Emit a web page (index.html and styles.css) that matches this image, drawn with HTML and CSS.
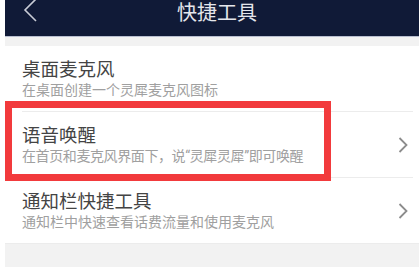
FILE: index.html
```html
<!DOCTYPE html>
<html lang="zh-CN">
<head>
    <meta charset="UTF-8">
    <meta name="viewport" content="width=device-width, initial-scale=1.0">
    <title>快捷工具</title>
    <link rel="stylesheet" href="styles.css">
</head>
<body>

<div class="page">
    <!-- Top bar -->
    <div class="top-bar">
        <svg class="back-icon" width="16" height="24" viewBox="0 0 16 24">
            <polyline points="13,0 2,11 13,22" fill="none" stroke="#c9ccd6" stroke-width="1.6"/>
        </svg>
        <div class="top-title">快捷工具</div>
    </div>
    <div class="gap-strip"></div>

    <!-- Tool list -->
    <div class="tool-list">
        <div class="tool-row">
            <div class="tool-text">
                <div class="tool-name">桌面麦克风</div>
                <div class="tool-desc">在桌面创建一个灵犀麦克风图标</div>
            </div>
        </div>
        <div class="tool-row">
            <div class="tool-text">
                <div class="tool-name">语音唤醒</div>
                <div class="tool-desc tight">在首页和麦克风界面下，说“灵犀灵犀”即可唤醒</div>
            </div>
            <svg class="arrow" width="10" height="16" viewBox="0 0 10 16">
                <polyline points="1.5,1 8.5,8 1.5,15" fill="none" stroke="#8c8c8c" stroke-width="1.8"/>
            </svg>
        </div>
        <div class="tool-row">
            <div class="tool-text">
                <div class="tool-name">通知栏快捷工具</div>
                <div class="tool-desc">通知栏中快速查看话费流量和使用麦克风</div>
            </div>
            <svg class="arrow" width="10" height="16" viewBox="0 0 10 16">
                <polyline points="1.5,1 8.5,8 1.5,15" fill="none" stroke="#8c8c8c" stroke-width="1.8"/>
            </svg>
        </div>
    </div>
    <div class="bottom-strip"></div>

    <!-- Highlight marker -->
    <div class="highlight"></div>
</div>

</body>
</html>
```

FILE: styles.css
```css
body {
    margin: 0;
    background-color: #fff;
    font-family: "Noto Sans CJK SC", "Noto Sans", sans-serif;
    overflow: hidden;
}
.page {
    position: relative;
    margin-left: 5px;
    height: 269px;
}
.top-bar {
    height: 37px;
    background-color: #101a37;
    border-bottom: 1px solid #b9bfd0;
    display: flex;
    justify-content: center;
    box-sizing: border-box;
}
.back-icon {
    position: absolute;
    left: 18px;
    top: -1px;
}
.top-title {
    color: #e4e6ec;
    font-size: 20px;
    line-height: 22px;
    margin-top: 1px;
    margin-left: 10px;
}
.gap-strip {
    height: 9px;
    background-color: #f2f2f2;
}
.tool-list {
    background-color: #fff;
}
.tool-row {
    display: flex;
    align-items: center;
    margin-left: 17px;
    margin-right: 6px;
    height: 66px;
    border-top: 1px solid #ececec;
    box-sizing: border-box;
}
.tool-row:first-child {
    border-top: none;
    height: 65px;
}
.tool-text {
    flex: 1;
    padding-bottom: 2px;
}
.tool-name {
    color: #444;
    font-size: 18.5px;
    line-height: 24px;
}
.tool-desc {
    color: #a0a0a0;
    font-family: "Roboto", "Noto Sans CJK SC", sans-serif;
    font-size: 14px;
    line-height: 20px;
    white-space: nowrap;
}
.tight {
    letter-spacing: -0.4px;
}
.arrow {
    margin-right: 5px;
}
.bottom-strip {
    height: 23px;
    background-color: #f2f2f2;
    border-top: 1px solid #ececec;
}
.highlight {
    position: absolute;
    left: 0;
    top: 101px;
    width: 326px;
    height: 80px;
    border: 7px solid #f23a3c;
    box-sizing: border-box;
}
```
